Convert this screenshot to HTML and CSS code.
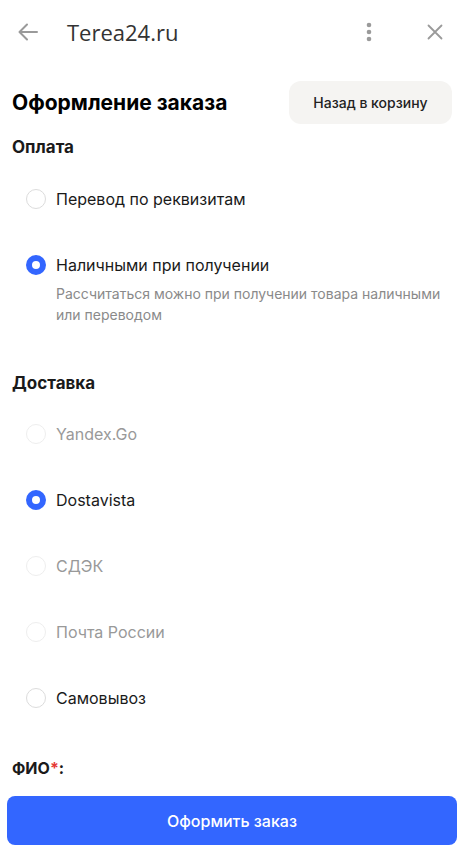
FILE: index.html
```html
<!DOCTYPE html>
<html lang="ru">
<head>
  <meta charset="UTF-8" />
  <meta name="viewport" content="width=device-width, initial-scale=1.0" />
  <title>Terea24.ru</title>
  <link rel="stylesheet" href="styles.css">
</head>
<body>
  <header class="topbar">
    <svg class="icon-back" width="22" height="22" viewBox="0 0 22 22">
      <path d="M20 11H3M10 3.5L2.5 11L10 18.5" fill="none" stroke="#9a9a9a" stroke-width="2" stroke-linecap="round" stroke-linejoin="round"/>
    </svg>
    <div class="site-title">Terea24.ru</div>
    <svg class="icon-more" width="8" height="20" viewBox="0 0 8 20">
      <circle cx="4" cy="3" r="2.3" fill="#9a9a9a"/>
      <circle cx="4" cy="10" r="2.3" fill="#9a9a9a"/>
      <circle cx="4" cy="17" r="2.3" fill="#9a9a9a"/>
    </svg>
    <svg class="icon-close" width="16" height="16" viewBox="0 0 16 16">
      <path d="M1.5 1.5L14.5 14.5M14.5 1.5L1.5 14.5" stroke="#9a9a9a" stroke-width="1.8" stroke-linecap="round"/>
    </svg>
  </header>

  <main class="checkout">
    <div class="heading-row">
      <h1>Оформление заказа</h1>
      <button class="back-btn">Назад в корзину</button>
    </div>

    <h2>Оплата</h2>
    <div class="options">
      <label class="option">
        <span class="radio"></span>
        <span class="option-text">Перевод по реквизитам</span>
      </label>
      <label class="option">
        <span class="radio checked"></span>
        <span class="option-body">
          <span class="option-text">Наличными при получении</span>
          <span class="option-desc">Рассчитаться можно при получении товара наличными или переводом</span>
        </span>
      </label>
    </div>

    <h2 class="delivery-title">Доставка</h2>
    <div class="options">
      <label class="option disabled">
        <span class="radio"></span>
        <span class="option-text">Yandex.Go</span>
      </label>
      <label class="option">
        <span class="radio checked"></span>
        <span class="option-text">Dostavista</span>
      </label>
      <label class="option disabled">
        <span class="radio"></span>
        <span class="option-text">СДЭК</span>
      </label>
      <label class="option disabled">
        <span class="radio"></span>
        <span class="option-text">Почта России</span>
      </label>
      <label class="option">
        <span class="radio"></span>
        <span class="option-text">Самовывоз</span>
      </label>
    </div>

    <div class="field-label">ФИО<span class="req">*</span>:</div>
  </main>

  <div class="submit-bar">
    <button class="submit-btn">Оформить заказ</button>
  </div>
</body>
</html>
```

FILE: styles.css
```css
body {
  margin: 0;
  font-family: Inter, "Noto Sans", sans-serif;
  color: #1a1a1a;
  background: #fff;
  height: 856px;
  overflow: hidden;
}

.topbar {
  height: 64px;
  display: flex;
  align-items: center;
  padding: 0 22px 0 17px;
}

.icon-back {
  flex: none;
}

.site-title {
  font-family: "Open Sans", sans-serif;
  font-size: 22px;
  color: #333;
  margin-left: 28px;
  flex: 1;
  padding-bottom: 1px;
}

.icon-more {
  margin-right: 54px;
}

.checkout {
  padding: 0 13px 0 12px;
}

.heading-row {
  display: flex;
  justify-content: space-between;
  align-items: center;
  margin-top: 17px;
}

h1 {
  margin: 0;
  font-size: 21px;
  font-weight: 700;
  color: #000;
}

.back-btn {
  width: 163px;
  height: 43px;
  border: none;
  border-radius: 12px;
  background: #f5f4f2;
  font-family: inherit;
  font-size: 14px;
  font-weight: 500;
  color: #222;
}

h2 {
  margin: 13px 0 9px;
  font-size: 17px;
  line-height: 20px;
  font-weight: 700;
  color: #1a1a1a;
}

.delivery-title {
  margin-top: 25px;
  margin-bottom: 8px;
}

.option {
  display: flex;
  align-items: flex-start;
  padding: 23px 0 23px 14px;
  font-size: 16px;
  line-height: 20px;
}

.radio {
  flex: none;
  box-sizing: border-box;
  width: 20px;
  height: 20px;
  border-radius: 50%;
  border: 1px solid #dcdcdc;
  margin-right: 10px;
}

.radio.checked {
  border: 6px solid #3366ff;
}

.option.disabled .radio {
  border-color: #eeeeee;
}

.option.disabled .option-text {
  color: #999;
}

.option-body {
  display: flex;
  flex-direction: column;
}

.option-desc {
  margin-top: 8px;
  font-size: 14px;
  line-height: 21px;
  color: #8a8a8a;
}

.field-label {
  margin-top: 27px;
  font-size: 16px;
  line-height: 20px;
  font-weight: 700;
}

.req {
  color: #e53935;
}

.submit-bar {
  position: fixed;
  left: 7px;
  right: 8px;
  top: 796px;
}

.submit-btn {
  width: 100%;
  height: 49px;
  border: none;
  border-radius: 8px;
  background: #3366ff;
  color: #fff;
  font-family: inherit;
  font-size: 16px;
  font-weight: 500;
}
```
